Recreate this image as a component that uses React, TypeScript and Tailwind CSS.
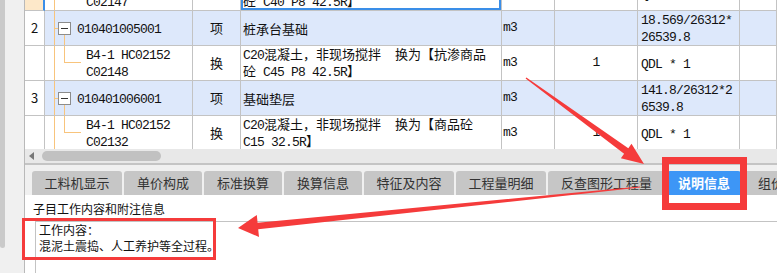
import React from "react";

type Row = {
  kind: "item" | "sub";
  no?: string;
  code: string[];
  type: string;
  name: string[];
  unit: string;
  qty: string;
  expr: string[];
  first?: boolean;
};

const rows: Row[] = [
  {
    kind: "sub",
    code: ["B4-1 HC02152", "C02147"],
    type: "换",
    name: ["C20混凝土，非现场搅拌  换为【抗渗商品", "砼 C40 P8 42.5R】"],
    unit: "m3",
    qty: "1",
    expr: ["QDL * 1"],
    first: true,
  },
  {
    kind: "item",
    no: "2",
    code: ["010401005001"],
    type: "项",
    name: ["桩承台基础"],
    unit: "m3",
    qty: "",
    expr: ["18.569/26312*", "26539.8"],
  },
  {
    kind: "sub",
    code: ["B4-1 HC02152", "C02148"],
    type: "换",
    name: ["C20混凝土，非现场搅拌  换为【抗渗商品", "砼 C45 P8 42.5R】"],
    unit: "m3",
    qty: "1",
    expr: ["QDL * 1"],
  },
  {
    kind: "item",
    no: "3",
    code: ["010401006001"],
    type: "项",
    name: ["基础垫层"],
    unit: "m3",
    qty: "",
    expr: ["141.8/26312*2", "6539.8"],
  },
  {
    kind: "sub",
    code: ["B4-1 HC02152", "C02132"],
    type: "换",
    name: ["C20混凝土，非现场搅拌  换为【商品砼", "C15 32.5R】"],
    unit: "m3",
    qty: "1",
    expr: ["QDL * 1"],
  },
];

const tabs = [
  { label: "工料机显示", w: "w-[90px]" },
  { label: "单价构成", w: "w-[78px]" },
  { label: "标准换算", w: "w-[78px]" },
  { label: "换算信息", w: "w-[78px]" },
  { label: "特征及内容", w: "w-[90px]" },
  { label: "工程量明细", w: "w-[90px]" },
  { label: "反查图形工程量", w: "w-[117px]" },
  { label: "说明信息", w: "w-[74px]", active: true },
  { label: "组价内容", w: "w-[82px]" },
];

// latin runs in a mono face, CJK falls through to Noto
function M({ s }: { s: string }) {
  const parts = s.split(/([\x20-\x7e]+)/);
  return (
    <>
      {parts.map((p, i) =>
        /^[\x20-\x7e]+$/.test(p) ? (
          <span key={i} className="font-['Liberation_Mono',monospace] tracking-[-0.8px]">
            {p}
          </span>
        ) : (
          <React.Fragment key={i}>{p}</React.Fragment>
        )
      )}
    </>
  );
}

function Lines({ lines }: { lines: string[] }) {
  return (
    <div className="whitespace-pre leading-[15px]">
      {lines.map((l, i) => (
        <div key={i}>
          <M s={l} />
        </div>
      ))}
    </div>
  );
}

function TreeCell({ row }: { row: Row }) {
  const orange = "bg-[#f8c47c]";
  return (
    <div className="relative h-full border-r border-b border-[#c3c3c3] flex items-center">
      <span className={`absolute left-[9px] top-0 bottom-0 w-px ${orange}`} />
      {row.kind === "item" ? (
        <>
          <span className={`absolute left-[9px] top-[17px] w-[4px] h-px ${orange}`} />
          <span className="absolute left-[13px] top-[11px] w-[13px] h-[13px] border border-[#8c8c8c] bg-white flex items-center justify-center">
            <span className="w-[7px] h-px bg-[#333]" />
          </span>
          <span className={`absolute left-[19px] top-[24px] bottom-0 w-px ${orange}`} />
          <div className="pl-[32px]">
            <Lines lines={row.code} />
          </div>
        </>
      ) : (
        <>
          <span className={`absolute left-[19px] top-0 h-[16px] w-px ${orange}`} />
          <span className={`absolute left-[19px] top-[16px] w-[17px] h-px ${orange}`} />
          <div className="pl-[41px]">
            <Lines lines={row.code} />
          </div>
        </>
      )}
    </div>
  );
}

function TableRow({ row }: { row: Row }) {
  const bg = row.kind === "item" ? "bg-[#dde8fb]" : "bg-white";
  const cell = "h-full border-r border-b border-[#c3c3c3] flex items-center";
  return (
    <div
      className={`grid grid-cols-[20px_148px_48px_261px_53px_83px_102px_1fr] h-[35px] shrink-0 ${
        row.first ? "-mt-[24px]" : ""
      }`}
    >
      <div
        className={`${cell} justify-center ${
          row.first ? "bg-[#fde8c9] border-r-2 border-r-[#3a8ee8]" : "bg-white"
        }`}
      >
        {row.no}
      </div>
      <div className={bg}>
        <TreeCell row={row} />
      </div>
      <div className={`${cell} ${bg} justify-center`}>{row.type}</div>
      <div className={`${cell} ${bg} relative pl-[2px]`}>
        <Lines lines={row.name} />
        {row.first && <span className="absolute inset-0 border-2 border-[#3a8ee8]" />}
      </div>
      <div className={`${cell} ${bg} pl-[1px]`}>
        <M s={row.unit} />
      </div>
      <div className={`${cell} ${bg} justify-center`}>
        <M s={row.qty} />
      </div>
      <div className={`${cell} ${bg} pl-[3px]`}>
        <Lines lines={row.expr} />
      </div>
      <div className={`${cell} ${bg}`} />
    </div>
  );
}

export default function App() {
  return (
    <div className="relative w-[777px] h-[273px] overflow-hidden flex bg-white text-[#111] font-['Noto_Sans_CJK_SC',sans-serif] text-[13px]">
      {/* left gutter */}
      <div className="w-[24px] shrink-0 bg-[#f0f0f0]">
        <div className="w-[5px] h-[248px] bg-[#cacaca] rounded-b-[3px]" />
      </div>

      <div className="flex-1 min-w-0 flex flex-col border-l border-[#b9b9b9]">
        {/* grid */}
        <div className="h-[149px] overflow-hidden flex flex-col">
          {rows.map((r, i) => (
            <TableRow key={i} row={r} />
          ))}
        </div>

        {/* horizontal scrollbar */}
        <div className="h-[14px] bg-[#e8e8e8] flex items-center">
          <span className="ml-[4px] w-0 h-0 border-y-[4px] border-y-transparent border-r-[5px] border-r-[#777]" />
          <span className="ml-[8px] w-[119px] h-[10px] rounded-full bg-[#c1c1c1]" />
        </div>

        {/* tab strip */}
        <div className="border-t-2 border-[#c4c4c4] bg-[#f0f0f0] pt-[6px] pl-[7px] flex gap-[2px]">
          {tabs.map((t) => (
            <div
              key={t.label}
              className={`${t.w} shrink-0 h-[24px] rounded-t-[3px] flex items-center justify-center ${
                t.active ? "bg-[#3d96f6] text-white font-bold" : "bg-[#c6c6c6] text-[#333]"
              }`}
            >
              {t.label}
            </div>
          ))}
        </div>

        {/* description panel */}
        <div className="flex-1 bg-white flex flex-col text-[12px]">
          <div className="pl-[8px] pt-[6px] leading-[16px]">子目工作内容和附注信息</div>
          <div className="flex-1 mt-[4px] ml-[10px] border-t border-l border-[#c3c3c3] pl-[3px] leading-[16px]">
            <div>工作内容：</div>
            <div>混泥土震捣、人工养护等全过程。</div>
          </div>
        </div>
      </div>

      {/* annotations */}
      <svg className="absolute inset-0 pointer-events-none" width="777" height="273" viewBox="0 0 777 273">
        <polygon
          fill="#f53b3b"
          points="525.6,78.5 624.1,153.8 620.9,158.3 644,164 631.5,143.7 628.3,148.2 526.4,77.5"
        />
        <polygon
          fill="#f53b3b"
          points="640,187.5 258.2,229.2 259,237 238,228 256.8,215 257.6,222.8 640,186.5"
        />
        <rect x="665.5" y="160.5" width="78" height="46" fill="none" stroke="#f53b3b" strokeWidth="7" />
        <rect x="23.5" y="219.5" width="191" height="39" fill="none" stroke="#f53b3b" strokeWidth="3" />
      </svg>
    </div>
  );
}
